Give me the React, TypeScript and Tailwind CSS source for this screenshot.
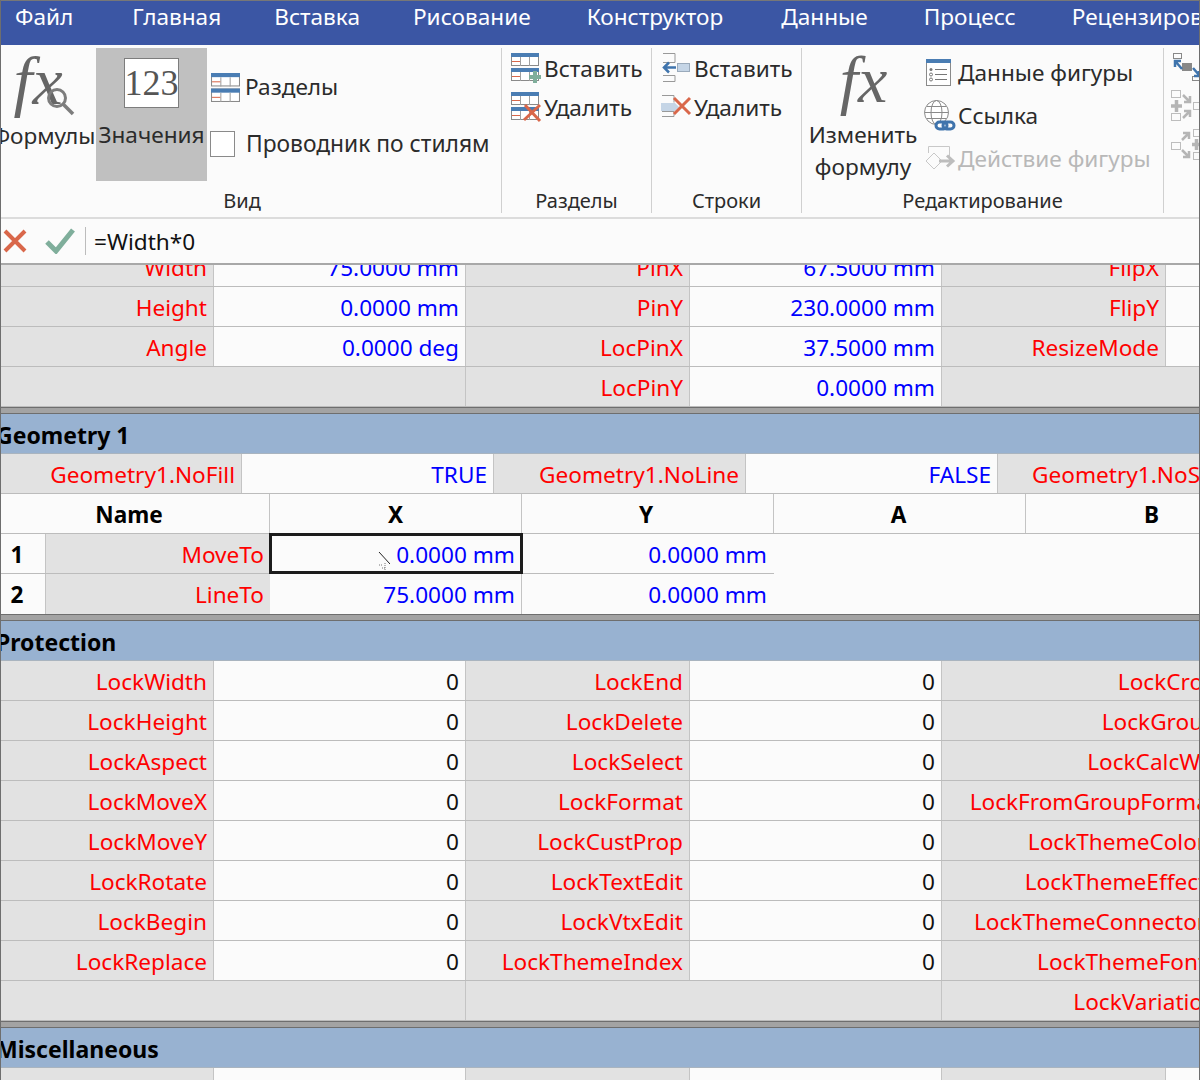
import React from 'react';

const font = { fontFamily: '"Noto Sans", sans-serif' };

type Cell = { w: number; text?: string; kind: 'label' | 'value' | 'blank' | 'head' | 'index'; color?: string };

const Row = ({ cells }: { cells: Cell[] }) => (
  <div className="flex h-10 border-b border-[#bcbcbc]">
    {cells.map((c, i) => (
      <div
        key={i}
        style={{ width: c.w }}
        className={
          'shrink-0 h-full border-r border-[#c4c4c4] overflow-hidden whitespace-nowrap leading-[41px] ' +
          (c.kind === 'label' ? 'bg-[#e2e2e2] text-right pr-[6px] text-[#ff0000]' : '') +
          (c.kind === 'value' ? 'bg-[#fbfbfb] text-right pr-[6px] ' + (c.color === 'black' ? 'text-[#111]' : 'text-[#0000ff]') : '') +
          (c.kind === 'blank' ? 'bg-[#e2e2e2]' : '') +
          (c.kind === 'head' ? 'bg-[#fbfbfb] text-center font-bold text-black' : '') +
          (i === 0 && c.kind === 'head' ? ' pr-[12px]' : '') +
          (i === 2 && c.kind === 'head' ? ' pr-[3px]' : '') +
          (i === 3 && c.kind === 'head' ? ' pr-[2px]' : '')
        }
      >
        {c.text}
      </div>
    ))}
  </div>
);

const L = (w: number, text: string): Cell => ({ w, text, kind: 'label' });
const V = (w: number, text: string): Cell => ({ w, text, kind: 'value' });
const N = (w: number, text: string): Cell => ({ w, text, kind: 'value', color: 'black' });
const B = (w: number): Cell => ({ w, kind: 'blank' });

const SectionHead = ({ title }: { title: string }) => (
  <>
    <div className="h-[7px] bg-[#a3a3a3] border-y border-[#6e6e6e]" />
    <div className="h-10 bg-[#98b2d1] border-b border-[#a9b4bf] font-bold text-black leading-[43px] -ml-[5px] whitespace-nowrap text-[23px]">
      {title}
    </div>
  </>
);

const protection: [string, string, string][] = [
  ['LockWidth', 'LockEnd', 'LockCrop'],
  ['LockHeight', 'LockDelete', 'LockGroup'],
  ['LockAspect', 'LockSelect', 'LockCalcWH'],
  ['LockMoveX', 'LockFormat', 'LockFromGroupFormat'],
  ['LockMoveY', 'LockCustProp', 'LockThemeColors'],
  ['LockRotate', 'LockTextEdit', 'LockThemeEffects'],
  ['LockBegin', 'LockVtxEdit', 'LockThemeConnectors'],
  ['LockReplace', 'LockThemeIndex', 'LockThemeFonts'],
];

const tabs: [string, number][] = [
  ['Файл', 14],
  ['Главная', 59],
  ['Вставка', 53],
  ['Рисование', 53],
  ['Конструктор', 56],
  ['Данные', 58],
  ['Процесс', 56],
  ['Рецензирование', 56],
];

const MiniTable = ({ x, y, head = '#4a7db3' }: { x: number; y: number; head?: string }) => (
  <g transform={`translate(${x} ${y})`}>
    <rect x="0.5" y="0.5" width="27" height="12" fill="#fff" stroke="#8a8a8a" />
    <rect x="0" y="0" width="28" height="4" fill={head} />
    <path d="M9.5 4v9M18.5 4v9" stroke="#a0a0a0" />
    <path d="M1 8.5h8" stroke="#d9674a" />
  </g>
);

const TablesIcon = ({ mark }: { mark?: 'plus' | 'x' }) => (
  <svg width="32" height="32" viewBox="0 0 32 32" className="self-start shrink-0">
    <MiniTable x={0} y={0} />
    <MiniTable x={0} y={15} />
    {mark === 'plus' && <path d="M22 18h4v4h4v4h-4v4h-4v-4h-4v-4h4z" fill="#7fae9b" />}
    {mark === 'x' && <path d="M13 28l16-15M14 13l15 16" stroke="#d9674a" strokeWidth="3" />}
  </svg>
);

const RowInsertIcon = () => (
  <svg width="32" height="32" viewBox="0 0 32 32" className="self-start shrink-0">
    <path d="M2 .5h12v9H2M2 22.5h12v6H2" fill="none" stroke="#999" />
    <rect x="16.5" y="10.5" width="12" height="8" fill="#c5d5e6" stroke="#9aaabb" />
    <path d="M15 14.5H3M8 9.5l-5 5 5 5" fill="none" stroke="#3f74ad" strokeWidth="2.5" />
  </svg>
);

const RowDeleteIcon = () => (
  <svg width="32" height="32" viewBox="0 0 32 32" className="self-start shrink-0">
    <path d="M1 3.5h12v7M1 24.5h12v-5H1" fill="none" stroke="#999" />
    <path d="M0 11h14l4 4-4 4H0z" fill="#c5d5e6" />
    <path d="M13 6l16 16M29 6L13 22" stroke="#d9674a" strokeWidth="3" />
  </svg>
);

const ShapeDataIcon = () => (
  <svg width="26" height="27" viewBox="0 0 26 27" className="shrink-0">
    <rect x="0.5" y="0.5" width="24" height="26" fill="#fff" stroke="#8a8a8a" />
    <rect x="0" y="0" width="25" height="4" fill="#4a7db3" />
    <path d="M9 10.5h12M9 15.5h12M9 20.5h12" stroke="#777" />
    <circle cx="5" cy="10.5" r="1.5" fill="#777" />
    <circle cx="5" cy="15.5" r="1.5" fill="none" stroke="#777" />
    <circle cx="5" cy="20.5" r="1.5" fill="none" stroke="#777" />
  </svg>
);

const LinkIcon = () => (
  <svg width="32" height="31" viewBox="0 0 32 31" className="shrink-0">
    <circle cx="12.5" cy="12.5" r="12" fill="#fff" stroke="#8a8a8a" />
    <ellipse cx="12.5" cy="12.5" rx="5.5" ry="12" fill="none" stroke="#8a8a8a" />
    <path d="M.5 12.5h24M3 6.5h19M3 18.5h19" stroke="#8a8a8a" />
    <rect x="12" y="22" width="11" height="7" rx="3.5" fill="#fff" stroke="#3f74ad" strokeWidth="3" />
    <rect x="19" y="22" width="11" height="7" rx="3.5" fill="none" stroke="#3f74ad" strokeWidth="3" />
  </svg>
);

const ActionIcon = () => (
  <svg width="32" height="26" viewBox="0 0 32 26" className="shrink-0">
    <path d="M4.5 7V.5h21V10" fill="none" stroke="#c8c8c8" />
    <path d="M10 7L2 15l8 8 8-8z" fill="#fbfbfb" stroke="#c8c8c8" />
    <path d="M15 15h13M23 9.5l6 5.500-6 5.500" fill="none" stroke="#bdbdbd" strokeWidth="3" />
  </svg>
);

const Sq = ({ x, y, w = 9, h = 7 }: { x: number; y: number; w?: number; h?: number }) => (
  <rect x={x + 0.5} y={y + 0.5} width={w} height={h} fill="none" stroke="currentColor" />
);

const GrayArrow = ({ d }: { d: string }) => <path d={d} fill="none" stroke="#b5b5b5" strokeWidth="2.5" />;

const ArrangeIcons = () => (
  <svg width="35" height="122" viewBox="1164 48 35 122" className="shrink-0 block text-[#bdbdbd]">
    <g className="text-[#888]">
      <Sq x={1173} y={53} w={8} h={5} />
      <Sq x={1192} y={76} w={7} h={4} />
      <rect x="1182" y="63" width="10" height="8" fill="#888" />
    </g>
    <path d="M1182 69l-6-7M1175 67v-6h6M1193 68l6 7M1199 71v5h-5" fill="none" stroke="#3f74ad" strokeWidth="2.5" />
    <Sq x={1171} y={90} />
    <Sq x={1171} y={113} />
    <Sq x={1193} y={102} w={6} />
    <path d="M1171 106h11M1176.500 100v12" stroke="#b5b5b5" strokeWidth="3.500" />
    <GrayArrow d="M1183 95l7 7M1190 96v6h-6M1183 118l7-7M1184 111h6v6" />
    <Sq x={1171} y={142} />
    <Sq x={1193} y={129} w={6} />
    <Sq x={1193} y={152} w={6} />
    <path d="M1192 144.500h8M1196.500 139v11" stroke="#b5b5b5" strokeWidth="3.500" />
    <GrayArrow d="M1182 140l7-7M1183 133h6v6M1182 150l7 7M1189 151v6h-6" />
  </svg>
);

const Fx = ({ size }: { size: number }) => (
  <span
    className="italic text-[#666] leading-none"
    style={{ fontFamily: '"Liberation Serif", serif', fontSize: size }}
  >
    fx
  </span>
);

export default function App() {
  return (
    <div
      className="w-[1200px] h-[1080px] overflow-hidden bg-[#fbfbfb] border-x border-[#6e6e6e] text-[22.6px] text-[#2b2b2b]"
      style={font}
    >
      {/* tabs */}
      <div className="h-[45px] bg-[#3b56a4] border-t border-[#777] flex text-white whitespace-nowrap leading-[32px]">
        {tabs.map(([t, ml]) => (
          <div key={t} className="shrink-0" style={{ marginLeft: ml }}>
            {t}
          </div>
        ))}
      </div>

      {/* ribbon */}
      <div className="h-[174px] bg-[#fbfbfb] border-b-2 border-[#dcdcdc] flex pt-[3px] whitespace-nowrap">
        <div className="w-[501px] shrink-0 border-r border-[#d0d0d0] h-[165px] flex flex-col">
          <div className="flex h-[133px] shrink-0">
            <div className="w-[95px] shrink-0 flex flex-col items-center overflow-hidden">
              <div className="relative h-[66px] w-[70px] mt-[2px]">
                <span className="absolute left-0 -top-[3px]"><Fx size={68} /></span>
                <svg className="absolute left-[31px] top-[37px]" width="30" height="30" viewBox="0 0 30 30">
                  <circle cx="12" cy="11" r="8.5" fill="none" stroke="#7d7d7d" strokeWidth="3" />
                  <path d="M18 17l10 10" stroke="#7d7d7d" strokeWidth="3.5" />
                </svg>
              </div>
              <div className="mt-[4px] mr-[10px] leading-[32px]">Формулы</div>
            </div>
            <div className="w-[111px] shrink-0 bg-[#c0c0c0] flex flex-col items-center pt-[10px]">
              <div
                className="w-[55px] h-[50px] mr-[1px] bg-white border border-[#7d7d7d] text-[36px] text-[#555] text-center leading-[48px]"
                style={{ fontFamily: '"Liberation Serif", serif' }}
              >
                123
              </div>
              <div className="mt-[11px] leading-[32px]">Значения</div>
            </div>
            <div className="flex flex-col pl-[4px]">
              <div className="flex items-center gap-[5px] mt-[23px] h-[32px]">
                <svg width="29" height="29" viewBox="0 0 28 28">
                  <MiniTable x={0} y={0} />
                  <MiniTable x={0} y={15} />
                </svg>
                <span>Разделы</span>
              </div>
              <div className="flex items-center gap-[11px] mt-[25px] h-[32px] -ml-[1px]">
                <div className="w-[25px] h-[26px] bg-white border border-[#8a8a8a]" />
                <span className="text-[22.8px]">Проводник по стилям</span>
              </div>
            </div>
          </div>
          <div className="mt-auto text-center leading-[24px] text-[20px] pr-[18px]">Вид</div>
        </div>

        <div className="w-[150px] shrink-0 border-r border-[#d0d0d0] h-[165px] flex flex-col pl-[9px]">
          <div className="flex items-center gap-[1px] h-[32px] mt-[5px]"><TablesIcon mark="plus" /><span>Вставить</span></div>
          <div className="flex items-center gap-[1px] h-[32px] mt-[7px]"><TablesIcon mark="x" /><span>Удалить</span></div>
          <div className="mt-auto text-center leading-[24px] text-[20px] -ml-[9px]">Разделы</div>
        </div>

        <div className="w-[150px] shrink-0 border-r border-[#d0d0d0] h-[165px] flex flex-col pl-[9px]">
          <div className="flex items-center gap-[1px] h-[32px] mt-[5px]"><RowInsertIcon /><span>Вставить</span></div>
          <div className="flex items-center gap-[1px] h-[32px] mt-[7px]"><RowDeleteIcon /><span>Удалить</span></div>
          <div className="mt-auto text-center leading-[24px] text-[20px] -ml-[9px]">Строки</div>
        </div>

        <div className="w-[362px] shrink-0 border-r border-[#d0d0d0] h-[165px] flex flex-col">
          <div className="flex h-[136px] shrink-0">
            <div className="w-[122px] shrink-0 flex flex-col items-center">
              <div className="h-[66px] ml-[1px] -mt-[1px]"><Fx size={66} /></div>
              <div className="mt-[6px] leading-[32px] text-center">Изменить<br />формулу</div>
            </div>
            <div className="flex flex-col gap-[10px] pt-[8px]">
              <div className="flex items-center gap-[6px] h-[33px] pl-[2px]"><ShapeDataIcon /><span>Данные фигуры</span></div>
              <div className="flex items-center gap-[2px] h-[33px]"><LinkIcon /><span>Ссылка</span></div>
              <div className="flex items-center gap-[2px] h-[33px] text-[#b8b8b8]"><ActionIcon /><span>Действие фигуры</span></div>
            </div>
          </div>
          <div className="mt-auto text-center leading-[24px] text-[20px]">Редактирование</div>
        </div>

        <ArrangeIcons />
      </div>

      {/* formula bar */}
      <div className="h-[46px] bg-[#fbfbfb] border-b-2 border-[#a8a8a8] flex items-center">
        <svg className="ml-[2px]" width="24" height="24" viewBox="0 0 24 24">
          <path d="M2 2l20 20M22 2L2 22" stroke="#d9674a" strokeWidth="4" />
        </svg>
        <svg className="ml-[18px]" width="30" height="26" viewBox="0 0 30 26">
          <path d="M2 14l9 9L28 2" fill="none" stroke="#7fae9b" strokeWidth="5" />
        </svg>
        <div className="ml-[10px] w-px h-[28px] bg-[#bcbcbc]" />
        <div className="ml-[8px] mt-[2px] text-[#111]">=Width*0</div>
      </div>

      {/* sheet */}
      <div className="overflow-hidden h-[815px]">
        <div className="-mt-[18px]">
          <Row cells={[L(213, 'Width'), V(252, '75.0000 mm'), L(224, 'PinX'), V(252, '67.5000 mm'), L(224, 'FlipX'), V(60, '')]} />
          <Row cells={[L(213, 'Height'), V(252, '0.0000 mm'), L(224, 'PinY'), V(252, '230.0000 mm'), L(224, 'FlipY'), V(60, '')]} />
          <Row cells={[L(213, 'Angle'), V(252, '0.0000 deg'), L(224, 'LocPinX'), V(252, '37.5000 mm'), L(224, 'ResizeMode'), V(60, '')]} />
          <Row cells={[B(465), L(224, 'LocPinY'), V(252, '0.0000 mm'), B(284)]} />
        </div>

        <SectionHead title="Geometry 1" />
        <Row cells={[L(241, 'Geometry1.NoFill'), V(252, 'TRUE'), L(252, 'Geometry1.NoLine'), V(252, 'FALSE'), L(254, 'Geometry1.NoShow')]} />
        <Row cells={[{ w: 269, text: 'Name', kind: 'head' }, { w: 252, text: 'X', kind: 'head' }, { w: 252, text: 'Y', kind: 'head' }, { w: 252, text: 'A', kind: 'head' }, { w: 252, text: 'B', kind: 'head' }]} />
        <div className="flex h-10 border-b border-[#bcbcbc] w-[773px] relative leading-[41px]">
          <div className="w-[45px] shrink-0 bg-[#fbfbfb] border-r border-[#c4c4c4] text-center font-bold text-black pr-[12px]">1</div>
          <div className="w-[224px] shrink-0 bg-[#e2e2e2] text-right pr-[6px] text-[#ff0000]">MoveTo</div>
          <div className="w-[252px] shrink-0 relative bg-[#fbfbfb] border-r border-[#c4c4c4] text-right pr-[6px] text-[#0000ff] outline-[3px] outline-[#1c1c1c]" style={{ outlineStyle: 'solid', outlineOffset: '-2px' }}>
            0.0000 mm
            <svg className="absolute left-[108px] top-[17px]" width="12" height="20" viewBox="0 0 12 20">
              <path d="M1 1l11 12" stroke="#222" fill="none" />
              <path d="M1 14l4 0M4 17l3 0M7 12v7" stroke="#777" strokeDasharray="1 1" fill="none" />
            </svg>
          </div>
          <div className="w-[252px] shrink-0 bg-[#fbfbfb] text-right pr-[7px] text-[#0000ff]">0.0000 mm</div>
        </div>
        <div className="flex h-10 w-[773px] bg-[#fbfbfb] leading-[41px]">
          <div className="w-[45px] shrink-0 border-r border-[#c4c4c4] text-center font-bold text-black pr-[12px]">2</div>
          <div className="w-[224px] shrink-0 bg-[#e2e2e2] text-right pr-[6px] text-[#ff0000]">LineTo</div>
          <div className="w-[252px] shrink-0 border-r border-[#c4c4c4] text-right pr-[6px] text-[#0000ff]">75.0000 mm</div>
          <div className="w-[252px] shrink-0 text-right pr-[7px] text-[#0000ff]">0.0000 mm</div>
        </div>

        <SectionHead title="Protection" />
        {protection.map(([a, b, c]) => (
          <Row key={a} cells={[L(213, a), N(252, '0'), L(224, b), N(252, '0'), L(282, c)]} />
        ))}
        <Row cells={[B(465), B(476), L(282, 'LockVariation')]} />

        <SectionHead title="Miscellaneous" />
        <Row cells={[B(213), V(252, ''), B(224), V(252, ''), B(224), V(60, '')]} />
      </div>
    </div>
  );
}
